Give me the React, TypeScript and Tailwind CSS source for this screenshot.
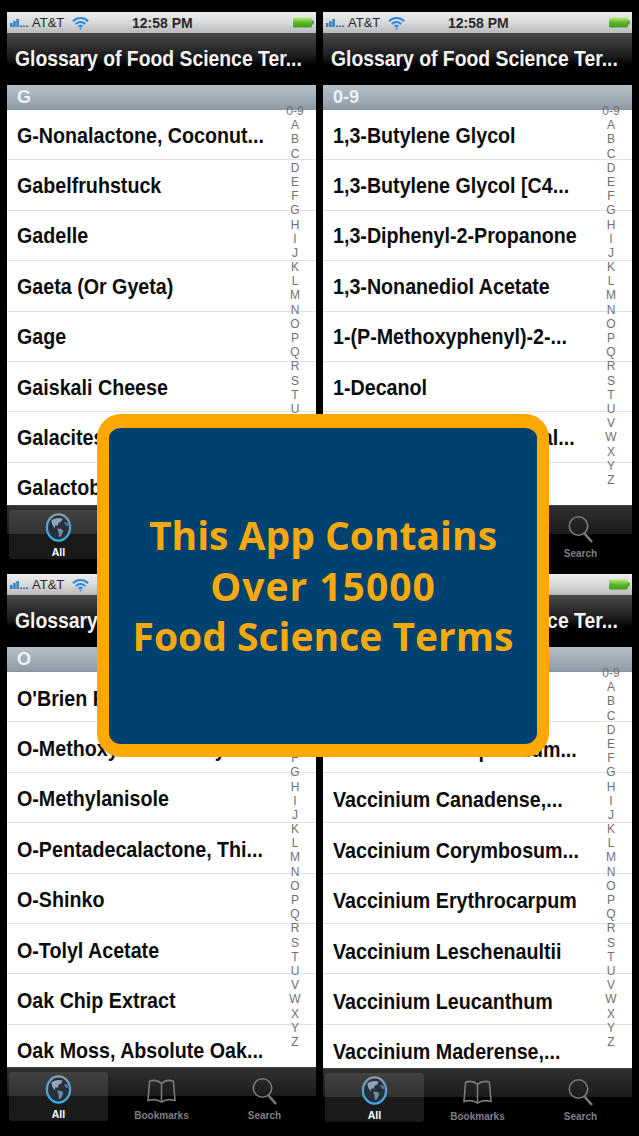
const INDEX = ["0-9", ..."ABCDEFGHIJKLMNOPQRSTUVWXYZ".split("")];

type Phone = {
  section: string;
  rows: string[];
  frameClass: string;
  rowClass: string;
};

const phones: Phone[] = [
  {
    section: "G",
    frameClass: "h-[547px]",
    rowClass: "pt-[2px]",
    rows: [
      "G-Nonalactone, Coconut...",
      "Gabelfruhstuck",
      "Gadelle",
      "Gaeta (Or Gyeta)",
      "Gage",
      "Gaiskali Cheese",
      "Galacitesl",
      "Galactobolillus",
    ],
  },
  {
    section: "0-9",
    frameClass: "h-[547px]",
    rowClass: "pt-[2px]",
    rows: [
      "1,3-Butylene Glycol",
      "1,3-Butylene Glycol [C4...",
      "1,3-Diphenyl-2-Propanone",
      "1,3-Nonanediol Acetate",
      "1-(P-Methoxyphenyl)-2-...",
      "1-Decanol",
      "1-Heptadecanol, Natural...",
      "1-Octanol",
    ],
  },
  {
    section: "O",
    frameClass: "h-[547px]",
    rowClass: "pt-[4px]",
    rows: [
      "O'Brien Potatoes",
      "O-Methoxybenzaldehyde",
      "O-Methylanisole",
      "O-Pentadecalactone, Thi...",
      "O-Shinko",
      "O-Tolyl Acetate",
      "Oak Chip Extract",
      "Oak Moss, Absolute Oak...",
    ],
  },
  {
    section: "V",
    frameClass: "h-[548px]",
    rowClass: "pt-[6px]",
    rows: [
      "Vaccinium Alaskaense",
      "Vaccinium Campanulum...",
      "Vaccinium Canadense,...",
      "Vaccinium Corymbosum...",
      "Vaccinium Erythrocarpum",
      "Vaccinium Leschenaultii",
      "Vaccinium Leucanthum",
      "Vaccinium Maderense,...",
    ],
  },
];

function Signal() {
  return (
    <svg width="20" height="10" viewBox="0 0 20 10">
      <rect x="0" y="5" width="2.5" height="4" fill="#2f7fc4" />
      <rect x="3.2" y="3" width="2.5" height="6" fill="#2f7fc4" />
      <rect x="6.4" y="1" width="2.5" height="8" fill="#2f7fc4" />
      <rect x="10" y="7.5" width="2" height="1.5" fill="#3c6f9c" />
      <rect x="13" y="7.5" width="2" height="1.5" fill="#3c6f9c" />
      <rect x="16" y="7.5" width="2" height="1.5" fill="#3c6f9c" />
    </svg>
  );
}

function Wifi() {
  return (
    <svg width="17" height="14" viewBox="0 0 17 14" fill="none" stroke="#2b8be0" strokeWidth="2">
      <path d="M1 5.2 C5 1, 12 1, 16 5.2" />
      <path d="M3.8 8 C6.5 5.4, 10.5 5.4, 13.2 8" />
      <path d="M6.6 10.6 C7.6 9.6, 9.4 9.6, 10.4 10.6" />
      <circle cx="8.5" cy="12.4" r="1" fill="#2b8be0" stroke="none" />
    </svg>
  );
}

function Battery() {
  return (
    <svg width="21" height="11" viewBox="0 0 21 11">
      <defs>
        <linearGradient id="battery" x1="0" y1="0" x2="0" y2="1">
          <stop offset="0" stopColor="#b6ec7c" />
          <stop offset="0.5" stopColor="#5db82a" />
          <stop offset="1" stopColor="#3f9a18" />
        </linearGradient>
      </defs>
      <rect x="0" y="0.5" width="19" height="10" rx="1.5" fill="url(#battery)" />
      <rect x="19" y="3.5" width="1.6" height="4" fill="#6d7a66" />
    </svg>
  );
}

function Globe() {
  return (
    <svg width="27" height="30" viewBox="0 0 27 30">
      <defs>
        <linearGradient id="ring" x1="0" y1="0" x2="0" y2="1">
          <stop offset="0" stopColor="#8d9aa6" />
          <stop offset="0.55" stopColor="#4aa3d8" />
          <stop offset="1" stopColor="#35b0ea" />
        </linearGradient>
      </defs>
      <ellipse cx="13.5" cy="15" rx="12" ry="13.5" fill="#27303a" stroke="url(#ring)" strokeWidth="2.4" />
      <path
        d="M6 8 C9 5, 14 4.5, 18 6 L16 9 L13.5 10 L13 13 L10 13 L9.5 16 L7 12 Z"
        fill="#8ea6bd"
      />
      <path d="M12 16 L17 16.5 L18.5 19 L16 24 L14 25 L13.5 20 Z" fill="#6f8ba6" />
      <path d="M19 9 L23 10 L24 14 L21 13 Z" fill="#5b7590" />
    </svg>
  );
}

function Book() {
  return (
    <svg width="29" height="25" viewBox="0 0 29 25" fill="none" stroke="#7b7b7b" strokeWidth="1.6">
      <path d="M14.5 4.5 C11.5 1.2, 6 0.8, 2.6 2.2 L1 21.5 C5.5 20.2, 11 20.6, 14.5 23 C18 20.6, 23.5 20.2, 28 21.5 L26.4 2.2 C23 0.8, 17.5 1.2, 14.5 4.5 Z" />
      <path d="M14.5 4.5 V23" />
    </svg>
  );
}

function Search() {
  return (
    <svg width="25" height="28" viewBox="0 0 25 28" fill="none" stroke="#7b7b7b">
      <circle cx="10.5" cy="11" r="9.2" strokeWidth="1.6" />
      <path d="M16.5 18.5 L24 27" strokeWidth="2.6" />
    </svg>
  );
}

function TabBar() {
  return (
    <div className="grid h-[54px] grid-cols-3 bg-[linear-gradient(#4a4a4a_0,#2f2f2f_3%,#1b1b1b_54%,#000_54%)] pt-[5px]">
      <div className="ml-[2px] flex h-[49px] w-[99px] flex-col items-center rounded-[3px] bg-white/10 pt-[3px]">
        <Globe />
        <span className="mt-[4px] text-[10.5px] leading-[13px] font-bold text-white">All</span>
      </div>
      <div className="flex flex-col items-center pt-[7px]">
        <Book />
        <span className="mt-[5px] text-[10px] leading-[13px] font-bold text-[#7f7f7f]">Bookmarks</span>
      </div>
      <div className="flex flex-col items-center pt-[5px]">
        <Search />
        <span className="mt-[4px] text-[10px] leading-[13px] font-bold text-[#7f7f7f]">Search</span>
      </div>
    </div>
  );
}

function PhoneScreen({ phone }: { phone: Phone }) {
  return (
    <div className={`relative flex w-[309px] flex-col overflow-hidden ${phone.frameClass}`}>
      <div className="relative flex h-[21px] items-center bg-[linear-gradient(#eeeeee,#d8d9da_50%,#b9babb)] pl-[3px] text-[#2a2a2a]">
        <Signal />
        <span className="ml-[2px] text-[13px] leading-none">AT&amp;T</span>
        <span className="ml-[8px]">
          <Wifi />
        </span>
        <span className="absolute left-[125px] text-[14px] leading-none font-bold">12:58 PM</span>
        <span className="absolute top-[5px] right-[2px] leading-none">
          <Battery />
        </span>
      </div>
      <div className="flex h-[52px] items-center bg-[linear-gradient(#494949,#1c1c1c_45%,#000_62%)] pt-[1px] pl-[8px]">
        <span className="inline-block origin-left scale-x-[0.9] text-[21.5px] leading-none font-bold whitespace-nowrap text-[#f4f4f4]">
          Glossary of Food Science Ter...
        </span>
      </div>
      <div className="flex h-[25px] items-center border-b border-[#8a949c] bg-[linear-gradient(#b7c0c7,#8f9ca7)] pl-[10px]">
        <span className="text-[18px] leading-none font-bold text-[#eef1f3]">{phone.section}</span>
      </div>
      <div className="flex-1 overflow-hidden bg-white">
        {phone.rows.map((row) => (
          <div
            key={row}
            className={`flex h-[50.4px] items-center border-b border-[#e2e2e2] pl-[10px] text-[#0c0c0c] ${phone.rowClass}`}
          >
            <span className="inline-block origin-left scale-x-[0.915] text-[21.5px] font-bold whitespace-nowrap">
              {row}
            </span>
          </div>
        ))}
      </div>
      <div className="absolute top-[92px] right-[6px] flex w-[30px] flex-col items-center text-[12px] text-[#707070]">
        {INDEX.map((label) => (
          <span key={label} className="h-[14.2px] leading-[14.2px]">
            {label}
          </span>
        ))}
      </div>
      <TabBar />
    </div>
  );
}

export default function App() {
  return (
    <div className="relative h-[1136px] w-[639px] overflow-hidden bg-black font-['Liberation_Sans',Arial,sans-serif]">
      <div className="grid grid-cols-[309px_309px] gap-x-[7px] gap-y-[15px] pt-[12px] pl-[7px]">
        {phones.map((phone) => (
          <PhoneScreen key={phone.section} phone={phone} />
        ))}
      </div>
      <div className="absolute top-[414px] left-[97px] flex h-[343px] w-[452px] flex-col items-center justify-center rounded-[24px] border-x-[12px] border-t-[14px] border-b-[13px] border-[#ffa800] bg-[#00426f] font-['Open_Sans',sans-serif] text-[39px] leading-[50.5px] font-bold text-[#f6a90f]">
        <span>This App Contains</span>
        <span className="tracking-[1px]">Over 15000</span>
        <span>Food Science Terms</span>
      </div>
    </div>
  );
}
